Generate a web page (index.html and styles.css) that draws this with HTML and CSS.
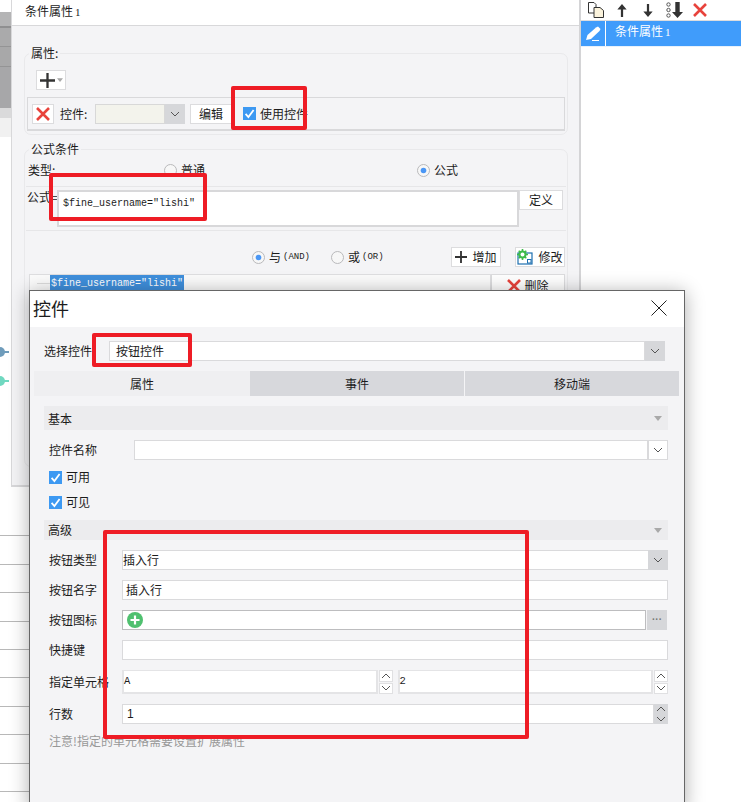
FILE: index.html
```html
<!DOCTYPE html>
<html lang="zh">
<head>
<meta charset="utf-8">
<title>控件</title>
<link rel="stylesheet" href="styles.css">
</head>
<body>
<svg class="sprite" aria-hidden="true">
  <symbol id="x" viewBox="0 0 14 14"><path d="M1 1 13 13M13 1 1 13" fill="none" stroke="#e8433c" stroke-width="2.6"/></symbol>
  <symbol id="chev" viewBox="0 0 10 6"><path d="M1 1 5 5 9 1" fill="none" stroke="#555" stroke-width="1"/></symbol>
  <symbol id="chevup" viewBox="0 0 10 6"><path d="M1 5 5 1 9 5" fill="none" stroke="#555" stroke-width="1"/></symbol>
  <symbol id="check" viewBox="0 0 13 13"><rect width="13" height="13" fill="#3d99f2"/><path d="M2.6 6.8 5.4 10 10.6 3" fill="none" stroke="#fff" stroke-width="1.8"/></symbol>
  <symbol id="radio" viewBox="0 0 13 13"><circle cx="6.5" cy="6.5" r="6" fill="#f7f7f7" stroke="#b9b9bb"/></symbol>
  <symbol id="radio-on" viewBox="0 0 13 13"><circle cx="6.5" cy="6.5" r="6" fill="#f7f7f7" stroke="#b9b9bb"/><circle cx="6.5" cy="6.5" r="2.8" fill="#4b97f5"/></symbol>
  <symbol id="plus" viewBox="0 0 13 13"><path d="M6.5 0V13M0 6.5H13" fill="none" stroke="#333" stroke-width="2"/></symbol>
  <symbol id="tri" viewBox="0 0 8 5"><path d="M0 0H8L4 5Z" fill="#a9a9a9"/></symbol>
</svg>
<div class="desk">
  <aside class="strip">
    <div class="strip-gray"><i class="band band-a"></i><i class="band band-b"></i><i class="band band-c"></i></div>
    <div class="strip-mid"></div>
    <div class="strip-low"></div>
  </aside>

  <section class="panel">
    <header class="panel-title">条件属性<span class="num">1</span></header>
    <div class="panel-body">
      <fieldset class="group group-attr">
        <legend>属性:</legend>
        <button class="btn add-btn"><svg class="i13"><use href="#plus"/></svg><svg class="tri-s"><use href="#tri"/></svg></button>
        <div class="ctrl-row">
          <button class="btn x-btn"><svg class="i14"><use href="#x"/></svg></button>
          <span class="ctrl-label">控件:</span>
          <div class="combo"><span class="combo-field"></span><span class="combo-arrow"><svg class="i-chev"><use href="#chev"/></svg></span></div>
          <button class="btn edit-btn">编辑</button>
          <svg class="box13 use-check"><use href="#check"/></svg>
          <span>使用控件</span>
        </div>
      </fieldset>

      <fieldset class="group group-formula">
        <legend>公式条件</legend>
        <div class="type-row">
          <span class="type-label">类型:</span>
          <span class="opt"><svg class="box13"><use href="#radio"/></svg>普通</span>
          <span class="opt"><svg class="box13"><use href="#radio-on"/></svg>公式</span>
        </div>
        <div class="rule"></div>
        <div class="formula-row">
          <span class="formula-label">公式=</span>
          <div class="formula-box">$fine_username="lishi"</div>
          <button class="btn define-btn">定义</button>
        </div>
        <div class="rule rule-b"></div>
        <div class="logic-row">
          <span class="opt opt-and"><svg class="box13"><use href="#radio-on"/></svg>与<span class="mono">(AND)</span></span>
          <span class="opt opt-or"><svg class="box13"><use href="#radio"/></svg>或<span class="mono">(OR)</span></span>
          <button class="btn act-btn add-cond"><svg class="i13"><use href="#plus"/></svg>增加</button>
          <button class="btn act-btn mod-cond">
            <svg class="gear" viewBox="0 0 16 16"><rect x="1" y="4" width="14" height="11" fill="#fff" stroke="#1d6fb0" stroke-width="1.2"/><rect x="10.5" y="10.5" width="3.5" height="3.5" fill="#fff" stroke="#1d6fb0"/><circle cx="5.5" cy="5.5" r="3" fill="#fff" stroke="#3dbb4a" stroke-width="2"/><path d="M5.5 0V2M5.5 9V11M0 5.5H2M9 5.5H11M1.7 1.7 3 3M8 8 9.3 9.3M9.3 1.7 8 3M3 8 1.7 9.3" stroke="#3dbb4a" stroke-width="1.6"/></svg>修改</button>
        </div>
        <div class="list-row">
          <div class="list-cell"><i class="tree-dash"></i><span class="sel-text">$fine_username="lishi"</span></div>
          <button class="btn del-btn"><svg class="i14"><use href="#x"/></svg>删除</button>
        </div>
      </fieldset>
    </div>
  </section>

  <aside class="side">
    <div class="toolbar">
      <svg class="tool tool-copy" viewBox="0 0 16 16"><path d="M.5.5H6L8 2.500V11H.5Z" fill="#fff" stroke="#333"/><path d="M6 5.500H12L15.500 8.500V15.500H6Z" fill="#fbf3dc" stroke="#333"/></svg>
      <svg class="tool tool-up" viewBox="0 0 12 14"><path d="M6 0 11 6H7.200V14H4.800V6H1Z" fill="#333"/></svg>
      <svg class="tool tool-down" viewBox="0 0 12 14"><path d="M6 14 11 8H7.200V0H4.800V8H1Z" fill="#333"/></svg>
      <svg class="tool tool-order" viewBox="0 0 17 16"><circle cx="2.500" cy="2.500" r="1.700" fill="none" stroke="#555"/><circle cx="2.500" cy="8" r="1.700" fill="none" stroke="#555"/><circle cx="2.500" cy="13.500" r="1.700" fill="none" stroke="#555"/><path d="M11.500 16 17 10H13.700V0H9.300V10H6Z" fill="#333"/></svg>
      <svg class="tool tool-x"><use href="#x"/></svg>
    </div>
    <div class="side-row">
      <span class="side-icon"><svg class="pencil" viewBox="0 0 16 15"><path d="M1 14 2.500 9 11 1.500 13 .5 15.500 3 14.500 5 6 13Z" fill="#fff"/><path d="M7 14.500H14" stroke="#fff"/></svg></span>
      <span class="side-text">条件属性<span class="num">1</span></span>
    </div>
  </aside>

  <div class="sheet">
    <i></i><i></i><i></i><i></i><i></i><i></i><i></i><i></i><i></i><i></i>
  </div>
  <i class="pin pin-blue"></i>
  <i class="pin pin-teal"></i>

  <section class="win">
    <header class="win-title">
      <span>控件</span>
      <svg class="win-close" viewBox="0 0 16 16"><path d="M.5.500 15.500 15.500M15.500.500 .5 15.500" fill="none" stroke="#222"/></svg>
    </header>
    <div class="win-body">
      <div class="pick-row">
        <span class="pick-label">选择控件</span>
        <div class="pick-field">按钮控件</div>
        <span class="arrow-block"><svg class="i-chev"><use href="#chev"/></svg></span>
      </div>
      <nav class="tabs">
        <span class="tab tab-on">属性</span>
        <span class="tab">事件</span>
        <span class="tab">移动端</span>
      </nav>
      <div class="form">
        <div class="section section-basic">基本<svg class="tri-s"><use href="#tri"/></svg></div>
        <div class="row row-name">
          <label>控件名称</label>
          <div class="field field-fill"></div>
          <span class="arrow-white"><svg class="i-chev"><use href="#chev"/></svg></span>
        </div>
        <div class="check-row"><svg class="box13"><use href="#check"/></svg>可用</div>
        <div class="check-row"><svg class="box13"><use href="#check"/></svg>可见</div>
        <div class="section">高级<svg class="tri-s"><use href="#tri"/></svg></div>
        <div class="row">
          <label>按钮类型</label>
          <div class="field field-fill field-flush">插入行</div>
          <span class="arrow-block"><svg class="i-chev"><use href="#chev"/></svg></span>
        </div>
        <div class="row">
          <label>按钮名字</label>
          <div class="field field-fill">插入行</div>
        </div>
        <div class="row">
          <label>按钮图标</label>
          <div class="field field-fill field-dark"><svg class="add-round" viewBox="0 0 16 16"><circle cx="8" cy="8" r="8" fill="#4fc06f"/><path d="M8 3.500V12.500M3.500 8H12.500" stroke="#fff" stroke-width="2.200"/></svg></div>
          <span class="more-block">···</span>
        </div>
        <div class="row">
          <label>快捷键</label>
          <div class="field field-fill"></div>
        </div>
        <div class="row row-tall">
          <label>指定单元格</label>
          <div class="field field-fill field-soft mono">A</div>
          <div class="spin"><span><svg class="i-chev"><use href="#chevup"/></svg></span><span><svg class="i-chev"><use href="#chev"/></svg></span></div>
          <div class="field field-fill field-soft field-next mono">2</div>
          <div class="spin"><span><svg class="i-chev"><use href="#chevup"/></svg></span><span><svg class="i-chev"><use href="#chev"/></svg></span></div>
        </div>
        <div class="row">
          <label>行数</label>
          <div class="field field-fill field-count">1</div>
          <div class="spin spin-gray"><svg class="i-chev"><use href="#chevup"/></svg><svg class="i-chev"><use href="#chev"/></svg></div>
        </div>
        <p class="note">注意!指定的单元格需要设置扩展属性</p>
      </div>
    </div>
  </section>

  <i class="mark mark-a"></i>
  <i class="mark mark-b"></i>
  <i class="mark mark-c"></i>
  <i class="mark mark-d"></i>
</div>
</body>
</html>
```

FILE: styles.css
```css
* { box-sizing: border-box; }
html, body { margin: 0; padding: 0; }
body {
  background: #fff;
  color: #1c1c1c;
  font: 12px/16px "Noto Sans CJK SC", "Noto Sans", sans-serif;
}
svg { display: block; flex: none; }
.sprite { display: none; }
button { font: inherit; color: inherit; padding: 0; }
i { display: block; }
.desk {
  position: relative;
  display: flex;
  width: 741px;
  height: 802px;
  overflow: hidden;
  background: #fff;
}
.mono { font-family: "Liberation Mono", monospace; }
.num { margin-left: 2px; font-family: "Liberation Serif", serif; font-size: 11px; }

/* left sliver of the sheet behind */
.strip { flex: 0 0 11px; padding-top: 12px; }
.strip-gray { height: 96px; background: #a7a7a9; }
.band { height: 16px; background: #b4b4b5; border-bottom: 2px solid #8f8f90; }
.band-b { height: 19px; background: #aaaaab; border-bottom: 1px solid #949495; }
.band-c { height: 20px; background: #a8a8a9; border-bottom: 1px solid #949495; }
.strip-mid { height: 10px; background: #dadadb; }
.strip-low { height: 19px; background: #f1f1f1; }
.sheet {
  position: absolute;
  left: 0;
  top: 508px;
  width: 29px;
}
.sheet i { height: 28.4px; border-bottom: 1px solid #b8b8b8; }
.pin { position: absolute; left: -5px; width: 10px; height: 10px; border-radius: 50%; }
.pin::after { content: ""; position: absolute; left: 9px; top: 4px; width: 5px; height: 2px; background: inherit; }
.pin-blue { top: 347px; background: #6f9cbb; }
.pin-teal { top: 376px; background: #70d8c0; }

/* condition panel */
.panel {
  flex: 0 0 570px;
  height: 487px;
  border: 1px solid #d8d8da;
  border-width: 0 2px 2px 1px;
  border-right-color: #d4d4d6;
}
.panel-title {
  height: 26px;
  padding: 3px 0 0 13px;
  background: #fff;
  border-bottom: 1px solid #d8d8da;
}
.panel-body {
  height: 459px;
  padding: 19px 0 0 12px;
  background: #f4f4f6;
}
.group {
  width: 544px;
  margin: 0;
  padding: 0 1px;
  border: 1px solid #e9e9eb;
  border-radius: 7px;
}
.group legend { margin-left: 3px; padding: 0 2px; line-height: 16px; }
.group-attr { height: 90px; }
.group-formula { height: 326px; margin-top: 6px; }
.btn {
  display: flex;
  align-items: center;
  justify-content: center;
  background: #fff;
  border: 1px solid #dcdcde;
}
.add-btn { gap: 2px; width: 30px; height: 20px; margin: 9px 0 0 10px; }
.add-btn .i13 { width: 15px; height: 15px; }
.i13 { width: 13px; height: 13px; }
.i14 { width: 14px; height: 14px; }
.tri-s { width: 6px; height: 4px; }
.i-chev { width: 10px; height: 6px; }
.box13 { width: 13px; height: 13px; }
.ctrl-row {
  display: flex;
  align-items: center;
  width: 538px;
  height: 34px;
  margin: 7px 0 0 1px;
  padding-left: 4px;
  border: 2px solid #d9d9db;
  border-width: 1px 1px 2px 1px;
}
.x-btn { width: 22px; height: 20px; }
.ctrl-label { width: 35px; margin-left: 6px; }
.combo { display: flex; width: 90px; height: 20px; }
.combo-field { flex: 1; background: #f3f3ec; border: 1px solid #d8d8d8; }
.combo-arrow { display: flex; align-items: center; justify-content: center; width: 20px; background: #d6d7da; }
.edit-btn { width: 42px; height: 20px; margin-left: 5px; }
.use-check { margin: 0 4px 0 11px; }
.type-row {
  display: grid;
  grid-template-columns: 138px 253px auto;
  align-items: center;
  height: 16px;
  margin-top: 5px;
}
.type-label { padding-left: 2px; }
.opt { display: inline-flex; align-items: center; gap: 4px; }
.rule { height: 1px; margin-top: 8px; background: #e6e6e8; }
.formula-row { position: relative; display: flex; height: 37px; margin-top: 3px; }
.formula-label { flex: 0 0 31px; min-width: 0; padding: 0 0 0 1px; margin-top: -1px; white-space: nowrap; }
.formula-box {
  position: relative;
  flex: 0 0 462px;
  height: 37px;
  padding: 4px 0 0 4px;
  background: #fff;
  border: 2px solid #d8d8da;
  font: 10px/16px "Liberation Mono", monospace;
}
.define-btn { width: 44px; height: 20px; }
.rule-b { margin-top: 3px; }
.logic-row { position: relative; display: flex; align-items: center; height: 20px; margin-top: 16px; }
.opt-and { margin-left: 226px; width: 79px; }
.opt-or { width: 120px; }
.opt .mono { margin-left: -2px; font-size: 9px; }
.act-btn { gap: 5px; width: 50px; height: 20px; }
.add-cond .i13 { width: 12px; height: 12px; }
.mod-cond { margin-left: 14px; }
.gear { width: 16px; height: 16px; }
.list-row { display: flex; height: 20px; margin: 7px 0 0 3px; }
.list-cell {
  display: flex;
  align-items: flex-start;
  width: 462px;
  height: 20px;
  padding-left: 7px;
  background: #fbfbfb;
  border: 1px solid #dedee0;
  font: 10px/17px "Liberation Mono", monospace;
}
.tree-dash { width: 13px; height: 1px; margin-top: 8px; background: #ddd; }
.sel-text { padding: 0 1px; background: #3f8fdc; color: #fff; }
.del-btn { gap: 3px; width: 74px; height: 24px; }

/* side list */
.side { flex: 1; }
.toolbar { position: relative; display: flex; align-items: center; height: 21px; padding-left: 7px; border-bottom: 1px solid #dddddf; }
.tool-copy { width: 16px; height: 16px; margin-right: 12px; }
.tool-up, .tool-down { width: 12px; height: 13px; margin-right: 14px; }
.tool-down { margin-right: 12px; }
.tool-order { width: 17px; height: 16px; margin-right: 10px; }
.tool-x { width: 14px; height: 14px; }
.side-row { display: flex; height: 26px; background: #409cfb; color: #fff; border-bottom: 1px solid #e8f1fb; }
.side-icon { display: flex; align-items: center; justify-content: center; width: 25px; border-right: 1px solid #fff; }
.pencil { width: 16px; height: 15px; }
.side-text { padding: 2px 0 0 9px; }

/* dialog window */
.win {
  position: absolute;
  left: 29px;
  top: 290px;
  width: 656px;
  height: 520px;
  background: #f4f4f6;
  border: 1px solid #666;
  box-shadow: 0 2px 18px rgba(0, 0, 0, .32);
}
.win-title {
  display: flex;
  align-items: center;
  justify-content: space-between;
  height: 36px;
  padding: 0 17px 2px 3px;
  background: #fff;
  font-size: 18px;
}
.win-close { width: 16px; height: 16px; }
.win-body { padding-top: 14px; }
.pick-row { display: flex; align-items: center; height: 20px; margin-right: 19px; padding-left: 14px; }
.pick-label { width: 65px; }
.pick-field {
  flex: 1;
  height: 20px;
  padding: 1px 0 0 6px;
  background: #fff;
  border: 1px solid #dadadc;
}
.arrow-block { display: flex; align-items: center; justify-content: center; flex: 0 0 20px; height: 20px; background: #d6d7da; }
.tabs { display: flex; height: 25px; margin: 10px 5px 0 4px; }
.tab {
  flex: 1;
  text-align: center;
  line-height: 25px;
  background: #d7d8dc;
  border-left: 1px solid #f4f4f6;
}
.tab-on { background: #efeff1; border-left: 0; flex: 0 0 216px; }
.tab-on + .tab { border-left: 0; }
.form { padding: 10px 16px 0 14px; }
.section {
  display: flex;
  align-items: center;
  justify-content: space-between;
  height: 20px;
  margin-top: 10px;
  padding: 0 6px 0 4px;
  background: #ececee;
}
.section .tri-s { width: 8px; height: 5px; }
.section-basic { height: 24px; margin-top: 0; padding-top: 1px; }
.row { display: flex; align-items: stretch; height: 20px; margin-top: 10px; }
.row label { flex: 0 0 78px; padding: 2px 0 0 5px; }
.field {
  height: 100%;
  padding: 1px 0 0 3px;
  background: #fff;
  border: 1px solid #dadadc;
}
.field-fill { flex: 1; }
.field-flush { padding-left: 0; border-right: 0; }
.field-dark { padding: 1px 0 0 4px; border-color: #bdbdbf; margin-right: 1px; }
.add-round { width: 16px; height: 16px; }
.row-name label { flex-basis: 90px; }
.arrow-white { display: flex; align-items: center; justify-content: center; flex: 0 0 20px; background: #fff; border: 1px solid #dadadc; }
.more-block {
  flex: 0 0 20px;
  min-width: 0;
  margin-right: 1px;
  overflow: hidden;
  text-align: center;
  font: bold 10px/20px "Liberation Sans", sans-serif;
  color: #777;
  background: #d6d7da;
}
.check-row { display: flex; align-items: center; gap: 4px; height: 16px; margin: 9px 0 0 5px; }
.row-tall { height: 24px; }
.row-tall label { padding-top: 4px; }
.field-soft { padding: 2px 0 0; border: 2px solid #e4e4e6; border-width: 1px 2px 2px 2px; font-size: 10.5px; }
.field-next { margin-left: 5px; }
.field-count { padding-left: 4px; font-family: "Liberation Sans", sans-serif; }
.spin { display: flex; flex-direction: column; gap: 1px; flex: 0 0 14px; margin-left: 1px; }
.spin span { display: flex; align-items: center; justify-content: center; flex: 1; background: #fff; border: 1px solid #e0e0e2; }
.spin-gray { align-items: center; justify-content: space-around; margin: 0; background: #d6d7da; }
.note { margin: 9px 0 0 5px; color: #989898; line-height: 16px; }

/* red annotation frames drawn over the screenshot */
.mark { position: absolute; border: 4px solid #ee1c25; border-radius: 2px; }
.mark-a { left: 231px; top: 86px; width: 76px; height: 44px; }
.mark-b { left: 49px; top: 173px; width: 158px; height: 48px; }
.mark-c { left: 92px; top: 333px; width: 100px; height: 34px; }
.mark-d { left: 103px; top: 530px; width: 426px; height: 209px; }
```
